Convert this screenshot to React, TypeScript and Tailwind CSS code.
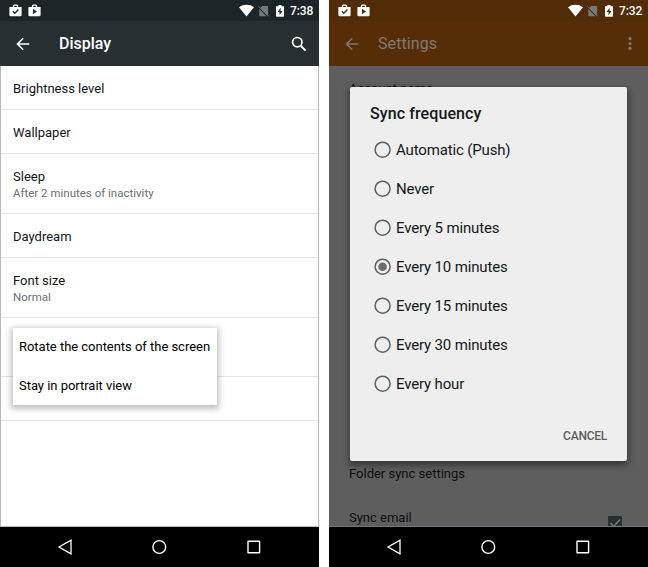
import React from "react";

const rows: { title: string; sub?: string; h: string }[] = [
  { title: "Brightness level", h: "h-[44px]" },
  { title: "Wallpaper", h: "h-[44px]" },
  { title: "Sleep", sub: "After 2 minutes of inactivity", h: "h-[60px]" },
  { title: "Daydream", h: "h-[44px]" },
  { title: "Font size", sub: "Normal", h: "h-[60px]" },
  { title: "", h: "h-[59px]" },
  { title: "", h: "h-[44px]" },
];

const options = [
  "Automatic (Push)",
  "Never",
  "Every 5 minutes",
  "Every 10 minutes",
  "Every 15 minutes",
  "Every 30 minutes",
  "Every hour",
];

function Bag({ children }: { children: React.ReactNode }) {
  return (
    <svg className="h-[13px] w-[13px]" viewBox="0 0 13 13" fill="none">
      <path d="M4.5 3.2V2q0-.9.9-.9h2.2q.9 0 .9.9v1.2" stroke="#fff" strokeWidth="1.3" />
      <path d="M.4 3h12.2v7.9a1.3 1.3 0 0 1-1.3 1.3H1.7A1.3 1.3 0 0 1 .4 10.9z" fill="#fff" />
      {children}
    </svg>
  );
}

function StatusBar({ time, ink, bg }: { time: string; ink: string; bg: string }) {
  return (
    <div className={"flex h-[21px] shrink-0 items-center pl-[9px] pr-[6px] text-white " + bg}>
      <div className="flex gap-[6px]">
        <Bag>
          <path d="M3.8 7.3l2 2 3.7-3.8" stroke={ink} strokeWidth="1.4" />
        </Bag>
        <Bag>
          <path d="M5 4.8v5.4l4-2.7z" fill={ink} />
        </Bag>
      </div>
      <svg className="ml-auto h-[13px] w-[15px]" viewBox="0 0 15 13">
        <path d="M0 3.2C4.2-.1 10.8-.1 15 3.2L7.5 12.4z" fill="#fff" />
      </svg>
      <svg className="ml-[4px] h-[12px] w-[11px]" viewBox="0 0 11 12">
        <path d="M4.2 1h4.9q1 0 1 1v9L2.3 3z" fill="#74797c" />
        <path d="M1.3 4.1 8.5 11.2H2.2q-.9 0-.9-.9z" fill="#74797c" />
        <path d="M.5 1.3l10 10" stroke="#74797c" strokeWidth="1" />
      </svg>
      <svg className="ml-[7px] h-[13px] w-[8px]" viewBox="0 0 8 13">
        <path d="M2.4 1h3.2v1.2H8V12q0 .8-.8.8H.8Q0 12.8 0 12V2.2h2.4z" fill="#fff" />
        <path d="M4.6 3.8L1.6 8h1.9v3.2L6.5 7H4.6z" fill={ink} />
      </svg>
      <span className="ml-[6px] w-[23px] text-[12px] leading-[14px] font-medium tracking-[-0.1px] whitespace-nowrap">{time}</span>
    </div>
  );
}

function BackArrow({ color }: { color: string }) {
  return (
    <svg className="h-[14px] w-[14px]" viewBox="0 0 14 14" fill="none" stroke={color} strokeWidth="1.5">
      <path d="M7.2 1.2 1.4 7l5.8 5.8M1.6 7H13.3" />
    </svg>
  );
}

function NavBar() {
  return (
    <div className="flex h-[40px] shrink-0 items-center bg-black pl-[57px]">
      <svg className="h-[16px] w-[16px]" viewBox="0 0 16 16" fill="none" stroke="#fff" strokeWidth="1.3">
        <path d="M2 8l12-6.8v13.6z" />
      </svg>
      <svg className="ml-[78px] h-[16px] w-[16px]" viewBox="0 0 16 16" fill="none" stroke="#fff" strokeWidth="1.4">
        <circle cx="8.3" cy="8" r="6.4" />
      </svg>
      <svg className="ml-[79px] h-[16px] w-[16px]" viewBox="0 0 16 16" fill="none" stroke="#fff" strokeWidth="1.4">
        <rect x="2" y="2.2" width="11.6" height="11.6" rx=".4" />
      </svg>
    </div>
  );
}

function DisplayPhone() {
  return (
    <div className="flex h-[567px] w-[319px] flex-col bg-[#272f33]">
      <StatusBar time="7:38" ink="#272f33" bg="bg-[#1e2528]" />
      <div className="flex h-[45px] shrink-0 items-center pr-[12px] pl-[16px]">
        <BackArrow color="#fff" />
        <h1 className="ml-[29px] pt-px text-[16px] leading-[20px] font-medium text-white">Display</h1>
        <svg className="ml-auto h-[16px] w-[16px]" viewBox="0 0 16 16" fill="none" stroke="#fff">
          <circle cx="6.3" cy="6.2" r="4.7" strokeWidth="1.7" />
          <path d="M9.6 9.6l5 5" strokeWidth="2" />
        </svg>
      </div>
      <div className="relative flex flex-1 flex-col border-x border-b border-[#b8b8b8] bg-white">
        {rows.map((r, i) => (
          <div key={i} className={"flex flex-col justify-center border-b border-[#e6e6e6] pt-[2px] pl-[12px] " + r.h}>
            <div className="text-[13px] leading-[17px] text-[#111517]">{r.title}</div>
            {r.sub && <div className="text-[11.5px] leading-[16px] text-[#6c7072]">{r.sub}</div>}
          </div>
        ))}
        <div className="absolute top-[262px] left-[12px] flex h-[77px] w-[204px] flex-col bg-white pl-[6px] text-[13px] tracking-[-0.03px] text-black shadow-[0_2px_6px_2px_rgba(0,0,0,0.25)]">
          <div className="flex h-[38px] items-center whitespace-nowrap">Rotate the contents of the screen</div>
          <div className="flex h-[39px] items-center whitespace-nowrap">Stay in portrait view</div>
        </div>
      </div>
      <NavBar />
    </div>
  );
}

function SettingsPhone() {
  return (
    <div className="relative flex h-[567px] w-[319px] flex-col bg-[#562d07]">
      <StatusBar time="7:32" ink="#562d07" bg="bg-[#522b07]" />
      <div className="flex h-[45px] shrink-0 items-center pr-[16px] pl-[16px]">
        <BackArrow color="#7d7a76" />
        <h1 className="ml-[19px] pt-px text-[16px] leading-[20px] tracking-[0.1px] text-[#7d7a76]">Settings</h1>
        <svg className="ml-auto h-[13px] w-[4px]" viewBox="0 0 4 13" fill="#7d7a76">
          <circle cx="2" cy="1.7" r="1.6" />
          <circle cx="2" cy="6.5" r="1.6" />
          <circle cx="2" cy="11.3" r="1.6" />
        </svg>
      </div>
      <div className="flex flex-1 flex-col justify-between overflow-hidden border-b border-[#70777a] bg-[#5e5e5e] pl-[20px] text-[13px] leading-[17px] text-[#0c0f10]">
        <div className="pt-[14px]">Account name</div>
        <div>
          <div className="h-[44px]">Folder sync settings</div>
          <div className="flex h-[17px] justify-between pr-[26px]">
            <span>Sync email</span>
            <svg className="mt-[7px] h-[14px] w-[14px]" viewBox="0 0 14 14">
              <rect width="14" height="14" rx="1" fill="#272f33" />
              <path d="M2.5 7l3.2 3.5L12 3.5" stroke="#73797b" strokeWidth="1.5" fill="none" />
            </svg>
          </div>
        </div>
      </div>
      <NavBar />
      <div className="absolute top-[87px] left-[21px] flex h-[374px] w-[277px] flex-col rounded-[2px] bg-[#eeeeee] shadow-[0_3px_7px_1px_rgba(0,0,0,0.45)]">
        <h2 className="pt-[16px] pl-[20px] text-[16px] leading-[21px] font-medium tracking-[0.1px] text-[#14181a]">Sync frequency</h2>
        <div className="mt-[6px] flex flex-col pl-[24px]">
          {options.map((o, i) => (
            <div key={o} className="flex h-[39px] items-center">
              <svg className="h-[18px] w-[18px]" viewBox="0 0 18 18">
                <circle cx="8.6" cy="8.7" r="7.5" fill="none" stroke="#5d6062" strokeWidth="1.5" />
                {i === 3 && <circle cx="8.6" cy="8.7" r="4.3" fill="#6b6d6e" />}
              </svg>
              <span className="ml-[4px] text-[15px] leading-[20px] tracking-[-0.15px] text-[#14181a]">{o}</span>
            </div>
          ))}
        </div>
        <div className="mt-auto mr-[20px] mb-[17px] self-end text-[12px] leading-[16px] font-medium tracking-[-0.25px] text-[#5d6062]">CANCEL</div>
      </div>
    </div>
  );
}

export default function App() {
  return (
    <div className="flex h-[567px] w-[648px] justify-between overflow-hidden bg-white font-['Roboto',sans-serif]">
      <DisplayPhone />
      <SettingsPhone />
    </div>
  );
}
